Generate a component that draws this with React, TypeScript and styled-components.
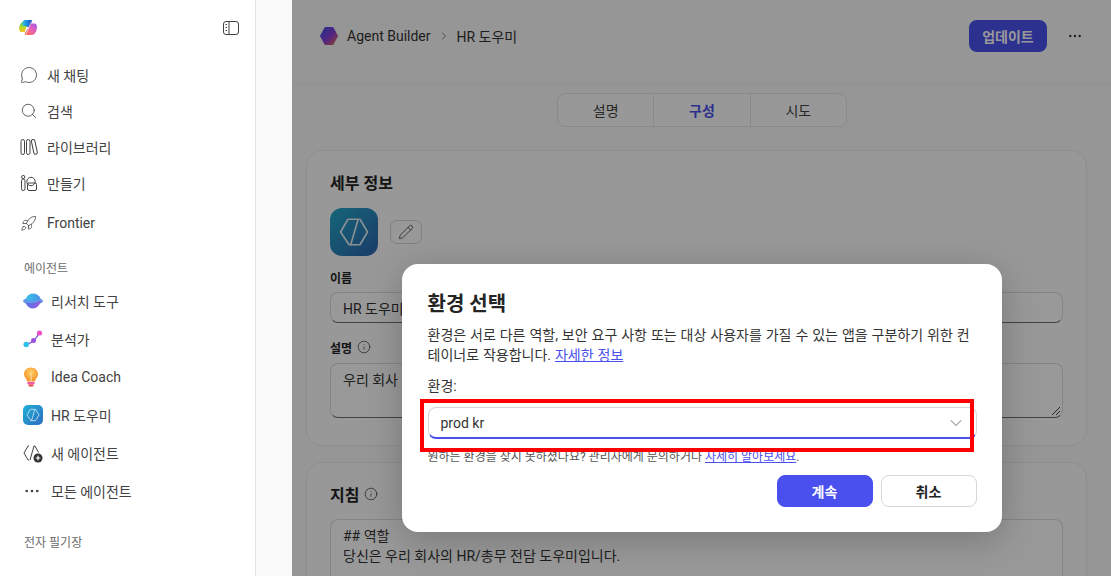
import React, {FC} from 'react';
import styled, {createGlobalStyle} from 'styled-components';
import {ChevronDown, ChevronRight, Info, MessageCircle, MoreHorizontal, Pencil, Rocket, Search} from 'lucide-react';

const FONT = 'Roboto, "Noto Sans CJK KR", sans-serif';

const Global = createGlobalStyle`
  html, body {
    margin: 0;
    height: 576px;
    overflow: hidden;
    background: #fafafa;
    font-family: ${FONT};
    color: #242424;
  }
  * { box-sizing: border-box; }
`;

const CopilotLogo = () => (
    <svg width="20" height="20" viewBox="0 0 20 20">
        <defs>
            <linearGradient id="cpA" x1="0" y1="0" x2="1" y2="0">
                <stop offset="0" stopColor="#2cc4e0"/>
                <stop offset=".6" stopColor="#1f7fe0"/>
                <stop offset="1" stopColor="#1a3fb0"/>
            </linearGradient>
            <linearGradient id="cpB" x1="0" y1="0" x2="0" y2="1">
                <stop offset="0" stopColor="#2fc48a"/>
                <stop offset=".55" stopColor="#b8d82a"/>
                <stop offset="1" stopColor="#f5c020"/>
            </linearGradient>
            <linearGradient id="cpC" x1="1" y1="0" x2="0" y2="1">
                <stop offset="0" stopColor="#9a5cf0"/>
                <stop offset=".5" stopColor="#ee62b0"/>
                <stop offset="1" stopColor="#f5703a"/>
            </linearGradient>
        </defs>
        <path d="M6.500 2h6.300c1 0 1.400.8 1 1.700L11.800 9H4c.3-3.500 1-7 2.500-7Z" fill="url(#cpA)"/>
        <path d="M5 3.500C3 4.800 1 7.500 1 10.500c0 2 1.100 3.500 2.700 3.500h3l2.100-6H5Z" fill="url(#cpB)"/>
        <path d="M13 5.500h3.500c1.500 0 2.500 1.600 2.500 3.500 0 3.700-2.300 8-5 8H8.500c-1.500 0-2-1-1.500-2.200Z" fill="url(#cpC)"/>
        <path d="M13.300 3.500 8 16.500" stroke="#fff" strokeWidth="1" opacity=".55"/>
    </svg>
);

const PanelIcon = () => (
    <svg width="18" height="16" viewBox="0 0 18 16" fill="none" stroke="#424242" strokeWidth="1">
        <rect x="1.500" y="1.500" width="15" height="13" rx="2.500"/>
        <path d="M7 1.500v13M3.500 4.500h1.500M3.500 7.500h1.500M3.500 10.500h1.500"/>
    </svg>
);

const LibraryIcon = () => (
    <svg width="18" height="18" viewBox="0 0 18 18" fill="none" stroke="#424242" strokeWidth="1">
        <rect x="1" y="1.500" width="3.500" height="15" rx="1.750"/>
        <rect x="6.500" y="1.500" width="3.500" height="15" rx="1.750"/>
        <rect x="12.600" y="1.500" width="3.500" height="15" rx="1.750" transform="rotate(-12 14 9)"/>
    </svg>
);

const CreateIcon = () => (
    <svg width="18" height="18" viewBox="0 0 18 18" fill="none" stroke="#424242" strokeWidth="1">
        <rect x="1.500" y="5" width="3.500" height="11.500" rx="1.750"/>
        <circle cx="3.250" cy="3" r="1.600"/>
        <circle cx="11" cy="7.500" r="4.200"/>
        <rect x="7.500" y="9" width="9" height="7.500" rx="1.500"/>
    </svg>
);

const ResearchIcon = () => (
    <svg width="20" height="16" viewBox="0 0 20 16">
        <defs>
            <linearGradient id="rsA" x1="0" y1="0" x2="1" y2="0">
                <stop offset="0" stopColor="#35c4e8"/>
                <stop offset="1" stopColor="#4a8fe8"/>
            </linearGradient>
            <linearGradient id="rsB" x1="0" y1="0" x2="1" y2="0">
                <stop offset="0" stopColor="#5a6fe0"/>
                <stop offset="1" stopColor="#9b5ce0"/>
            </linearGradient>
        </defs>
        <ellipse cx="10" cy="8" rx="10" ry="3.600" fill="#5a9ae8"/>
        <path d="M3 5.500C4.500 2 7 .5 10 .5s6 1.500 7.500 5C14 8 7 8 3 5.500Z" fill="url(#rsA)"/>
        <path d="M2.500 9.500c4.500 1.500 10 1 15.500-2.200C17 12.500 13.500 15.500 10 15.500c-3.200 0-6-2-7.500-6Z" fill="url(#rsB)"/>
    </svg>
);

const AnalystIcon = () => (
    <svg width="20" height="18" viewBox="0 0 20 18">
        <path d="M3 15l8-4 6-9" fill="none" stroke="#8a6fe0" strokeWidth="1.400"/>
        <circle cx="3.200" cy="14.500" r="2.700" fill="#2cc0ea"/>
        <circle cx="10.500" cy="10.500" r="2.500" fill="#9a52dc"/>
        <circle cx="16.500" cy="3" r="2.600" fill="#ee4fc8"/>
    </svg>
);

const BulbIcon = () => (
    <svg width="16" height="20" viewBox="0 0 16 20">
        <defs>
            <radialGradient id="blA" cx=".5" cy=".35" r=".7">
                <stop offset="0" stopColor="#ffd06a"/>
                <stop offset="1" stopColor="#f58a1e"/>
            </radialGradient>
        </defs>
        <path d="M8 .5c3.800 0 7 2.800 7 6.600 0 2.500-1.400 4-2.500 5.400-.5.600-.6 1.500-.6 2H4.100c0-.5-.1-1.400-.6-2C2.400 11.100 1 9.600 1 7.100 1 3.300 4.200.5 8 .5Z" fill="url(#blA)"/>
        <path d="M8 6v8" stroke="#fbe3b0" strokeWidth="1"/>
        <rect x="4.300" y="15" width="7.400" height="2.500" rx="1" fill="#ee5aa8"/>
        <rect x="5.500" y="17.500" width="5" height="2" rx="1" fill="#e8484a"/>
    </svg>
);

const HexMark: FC<{size: number}> = ({size}) => (
    <svg width={size} height={size} viewBox="0 0 24 24" fill="none" stroke="#e4f1f6" strokeWidth="1.100" strokeLinecap="round" strokeLinejoin="round">
        <path d="M8.800 20.500 3 12l5-8.500h6.800l-5 17"/>
        <path d="M15.800 3.500h.2L21 12l-5 8.500H9.800"/>
    </svg>
);

const NewAgentIcon = () => (
    <svg width="20" height="20" viewBox="0 0 20 20">
        <g fill="none" stroke="#424242" strokeWidth="1" strokeLinejoin="round">
            <path d="M6 3H5L1 10l4 7h1"/>
            <path d="M11 3h1l3.500 6.500"/>
            <path d="M11 3L7 17"/>
        </g>
        <circle cx="15" cy="15" r="4.500" fill="#333"/>
        <path d="M15 12.700v4.600M12.700 15h4.600" stroke="#fff" strokeWidth="1.200"/>
    </svg>
);

const BuilderLogo = () => (
    <svg width="18" height="20" viewBox="0 0 18 20">
        <defs>
            <linearGradient id="abA" x1="0" y1="0" x2="1" y2="1">
                <stop offset="0" stopColor="#3a55e8"/>
                <stop offset=".55" stopColor="#8a3fd8"/>
                <stop offset="1" stopColor="#f07040"/>
            </linearGradient>
        </defs>
        <path d="M5 1.500h8l4.500 8.500L13 18.500H5L.5 10Z" fill="url(#abA)" stroke="url(#abA)" strokeLinejoin="round"/>
    </svg>
);

const Page = styled.div`
  display: flex;
  width: 1111px;
  height: 576px;
  overflow: hidden;
`;

const Sidebar = styled.aside`
  width: 256px;
  flex: none;
  background: #fff;
  border-right: 1px solid #e3e3e3;
  display: flex;
  flex-direction: column;
`;

const SideTop = styled.div`
  height: 57px;
  flex: none;
  display: flex;
  align-items: center;
  justify-content: space-between;
  padding: 0 15px 2px 18px;
`;

const NavRow = styled.div<{$tall?: boolean; $gap?: number}>`
  height: ${p => (p.$tall ? 38 : 36)}px;
  flex: none;
  margin-top: ${p => p.$gap ?? 0}px;
  display: flex;
  align-items: center;
  padding-left: ${p => (p.$tall ? 23 : 20)}px;
  font-size: 14px;
  color: #424242;
`;

const NavIcon = styled.span<{$tall?: boolean}>`
  width: ${p => (p.$tall ? 28 : 27)}px;
  flex: none;
  display: flex;
  align-items: center;
`;

const SectionLabel = styled.div<{$gap: number}>`
  height: 20px;
  flex: none;
  margin-top: ${p => p.$gap}px;
  padding-left: 24px;
  font-size: 12px;
  line-height: 20px;
  color: #6b6b6b;
`;

const SmallTile = styled.span`
  width: 20px;
  height: 20px;
  border-radius: 5px;
  background: linear-gradient(135deg, #1fb0d6, #2c6cc0);
  display: flex;
  align-items: center;
  justify-content: center;
`;

const Gutter = styled.div`
  width: 36px;
  flex: none;
  background: #fafafa;
`;

const Main = styled.main`
  position: relative;
  flex: 1;
  min-width: 0;
  background: #fafafa;
  display: flex;
  flex-direction: column;
`;

const Header = styled.header`
  height: 85px;
  flex: none;
  border-bottom: 1px solid #f0f0f0;
  display: flex;
  align-items: flex-start;
  padding: 20px 28px 0 28px;
`;

const Crumbs = styled.div`
  height: 32px;
  display: flex;
  align-items: center;
  gap: 7px;
  font-size: 14px;
  color: #333;
  flex: 1;
  svg:first-child { margin-right: 2px; }
`;

const UpdateButton = styled.button`
  width: 78px;
  height: 32px;
  border: 0;
  border-radius: 8px;
  background: #4a50ee;
  color: #fff;
  font: 600 14px ${FONT};
`;

const MoreButton = styled.span`
  width: 16px;
  height: 32px;
  margin-left: 20px;
  display: flex;
  align-items: center;
  justify-content: center;
  color: #333;
`;

const Tabs = styled.div`
  align-self: center;
  flex: none;
  width: 290px;
  height: 34px;
  margin-top: 8px;
  margin-left: 1px;
  display: flex;
  border: 1px solid #e6e6e6;
  border-radius: 8px;
  background: #fdfdfd;
`;

const Tab = styled.div<{$active?: boolean}>`
  flex: 1;
  display: flex;
  align-items: center;
  justify-content: center;
  font-size: 14px;
  font-weight: ${p => (p.$active ? 700 : 400)};
  color: ${p => (p.$active ? '#4a50ee' : '#424242')};
  & + & { border-left: 1px solid #e6e6e6; }
`;

const Card = styled.section<{$gap: number}>`
  flex: none;
  width: 781px;
  margin: ${p => p.$gap}px 0 0 14px;
  padding: 19px 23px 27px;
  background: #fdfdfd;
  border: 1px solid #ededed;
  border-radius: 16px;
`;

const CardTitle = styled.h2`
  margin: 0;
  height: 24px;
  display: flex;
  align-items: center;
  gap: 5px;
  font-size: 16px;
  font-weight: 700;
  color: #242424;
`;

const AvatarRow = styled.div`
  margin-top: 14px;
  display: flex;
  align-items: center;
  gap: 12px;
`;

const AgentAvatar = styled.div`
  width: 48px;
  height: 48px;
  border-radius: 12px;
  background: linear-gradient(135deg, #23a9c8, #2e63ae);
  display: flex;
  align-items: center;
  justify-content: center;
`;

const EditButton = styled.button`
  width: 32px;
  height: 24px;
  padding: 0;
  border: 1px solid #d6d6d6;
  border-radius: 7px;
  background: #fdfdfd;
  display: flex;
  align-items: center;
  justify-content: center;
  color: #333;
`;

const FieldLabel = styled.div<{$gap: number}>`
  height: 18px;
  margin-top: ${p => p.$gap}px;
  display: flex;
  align-items: center;
  gap: 5px;
  font-size: 12px;
  font-weight: 700;
  color: #242424;
`;

const FieldBox = styled.div<{$height: number; $gap: number}>`
  position: relative;
  height: ${p => p.$height}px;
  margin-top: ${p => p.$gap}px;
  padding: 6px 12px;
  border: 1px solid #dcdcdc;
  border-bottom-color: #6e6e6e;
  border-radius: 8px;
  background: #fff;
  font-size: 14px;
  line-height: 20px;
  color: #333;
`;

const Grip = styled.svg`
  position: absolute;
  right: 1px;
  bottom: 1px;
`;

const Overlay = styled.div`
  position: absolute;
  inset: 0;
  background: rgba(0, 0, 0, .4);
  display: flex;
  justify-content: center;
  align-items: flex-start;
  padding-top: 264px;
`;

const Modal = styled.div`
  width: 600px;
  height: 268px;
  flex: none;
  padding: 26px 25px 25px 26px;
  background: #fff;
  border-radius: 16px;
  box-shadow: 0 8px 36px rgba(0, 0, 0, .22);
`;

const ModalTitle = styled.h1`
  margin: 0;
  height: 28px;
  font-size: 20px;
  line-height: 28px;
  font-weight: 700;
  color: #242424;
`;

const ModalBody = styled.p`
  margin: 7px 0 0;
  font-size: 14px;
  line-height: 20px;
  word-spacing: .45px;
  color: #333;
`;

const TextLink = styled.a`
  color: #4a50ee;
  text-decoration: underline;
`;

const SelectLabel = styled.div`
  margin-top: 11px;
  height: 20px;
  font-size: 14px;
  line-height: 20px;
  color: #333;
`;

const SelectWrap = styled.div`
  position: relative;
  margin-top: 11px;
`;

const SelectBox = styled.div`
  height: 32px;
  display: flex;
  align-items: center;
  justify-content: space-between;
  padding: 0 10px 0 12px;
  border: 1px solid #d6d6d6;
  border-bottom: 2px solid #4a50ee;
  border-radius: 8px;
  font-size: 14px;
  color: #333;
`;

const RedMark = styled.div`
  position: absolute;
  top: -8px;
  left: -8px;
  right: 3px;
  bottom: -13px;
  border: 4px solid #f00;
  pointer-events: none;
`;

const HelpText = styled.div`
  margin-top: 10px;
  height: 16px;
  font-size: 12px;
  line-height: 16px;
  color: #555;
`;

const Actions = styled.div`
  margin-top: 10px;
  display: flex;
  justify-content: flex-end;
  gap: 8px;
`;

const ActionButton = styled.button<{$primary?: boolean}>`
  width: 96px;
  height: 32px;
  border-radius: 8px;
  border: 1px solid ${p => (p.$primary ? '#4a50ee' : '#d6d6d6')};
  background: ${p => (p.$primary ? '#4a50ee' : '#fff')};
  color: ${p => (p.$primary ? '#fff' : '#242424')};
  font: 700 14px ${FONT};
`;

const stroke = {size: 18, strokeWidth: 1.1, color: '#424242'};

const navItems = [
    {label: '새 채팅', icon: <MessageCircle {...stroke}/>},
    {label: '검색', icon: <Search {...stroke}/>},
    {label: '라이브러리', icon: <LibraryIcon/>},
    {label: '만들기', icon: <CreateIcon/>},
];

const agentItems = [
    {label: '리서치 도구', icon: <ResearchIcon/>},
    {label: '분석가', icon: <AnalystIcon/>},
    {label: 'Idea Coach', icon: <BulbIcon/>},
    {label: 'HR 도우미', icon: <SmallTile><HexMark size={16}/></SmallTile>},
    {label: '새 에이전트', icon: <NewAgentIcon/>},
    {label: '모든 에이전트', icon: <MoreHorizontal size={18} strokeWidth={1.6} color="#424242"/>},
];

export default function App() {
    return (
        <Page>
            <Global/>
            <Sidebar>
                <SideTop>
                    <CopilotLogo/>
                    <PanelIcon/>
                </SideTop>
                {navItems.map(n =>
                    <NavRow key={n.label}>
                        <NavIcon>{n.icon}</NavIcon>{n.label}
                    </NavRow>)}
                <NavRow $gap={4}>
                    <NavIcon><Rocket size={17} strokeWidth={1.1} color="#424242"/></NavIcon>Frontier
                </NavRow>
                <SectionLabel $gap={18}>에이전트</SectionLabel>
                <NavRow $tall $gap={3}>
                    <NavIcon $tall>{agentItems[0].icon}</NavIcon>{agentItems[0].label}
                </NavRow>
                {agentItems.slice(1).map(a =>
                    <NavRow $tall key={a.label}>
                        <NavIcon $tall>{a.icon}</NavIcon>{a.label}
                    </NavRow>)}
                <SectionLabel $gap={23}>전자 필기장</SectionLabel>
            </Sidebar>
            <Gutter/>
            <Main>
                <Header>
                    <Crumbs>
                        <BuilderLogo/>
                        <span>Agent Builder</span>
                        <ChevronRight size={12} strokeWidth={1.2}/>
                        <span>HR 도우미</span>
                    </Crumbs>
                    <UpdateButton>업데이트</UpdateButton>
                    <MoreButton><MoreHorizontal size={16} strokeWidth={1.6}/></MoreButton>
                </Header>
                <Tabs>
                    <Tab>설명</Tab>
                    <Tab $active>구성</Tab>
                    <Tab>시도</Tab>
                </Tabs>
                <Card $gap={23}>
                    <CardTitle>세부 정보</CardTitle>
                    <AvatarRow>
                        <AgentAvatar><HexMark size={36}/></AgentAvatar>
                        <EditButton><Pencil size={16} strokeWidth={1.1}/></EditButton>
                    </AvatarRow>
                    <FieldLabel $gap={12}>이름</FieldLabel>
                    <FieldBox $height={31} $gap={6}>HR 도우미</FieldBox>
                    <FieldLabel $gap={15}>설명 <Info size={14} strokeWidth={1.1}/></FieldLabel>
                    <FieldBox $height={55} $gap={7}>
                        우리 회사
                        <Grip width="10" height="10" viewBox="0 0 10 10" stroke="#444" strokeWidth="1">
                            <path d="M1 9l8-8M5 9l4-4"/>
                        </Grip>
                    </FieldBox>
                </Card>
                <Card $gap={16}>
                    <CardTitle>지침 <Info size={14} strokeWidth={1.1}/></CardTitle>
                    <FieldBox $height={120} $gap={13}>
                        ## 역할<br/>
                        당신은 우리 회사의 HR/총무 전담 도우미입니다.
                    </FieldBox>
                </Card>
                <Overlay>
                    <Modal>
                        <ModalTitle>환경 선택</ModalTitle>
                        <ModalBody>
                            환경은 서로 다른 역할, 보안 요구 사항 또는 대상 사용자를 가질 수 있는 앱을 구분하기 위한 컨테이너로 작용합니다. <TextLink>자세한 정보</TextLink>
                        </ModalBody>
                        <SelectLabel>환경:</SelectLabel>
                        <SelectWrap>
                            <SelectBox>
                                prod kr
                                <ChevronDown size={20} strokeWidth={1} color="#555"/>
                            </SelectBox>
                            <RedMark/>
                        </SelectWrap>
                        <HelpText>원하는 환경을 찾지 못하셨나요? 관리자에게 문의하거나 <TextLink>자세히 알아보세요</TextLink>.</HelpText>
                        <Actions>
                            <ActionButton $primary>계속</ActionButton>
                            <ActionButton>취소</ActionButton>
                        </Actions>
                    </Modal>
                </Overlay>
            </Main>
        </Page>
    );
}
